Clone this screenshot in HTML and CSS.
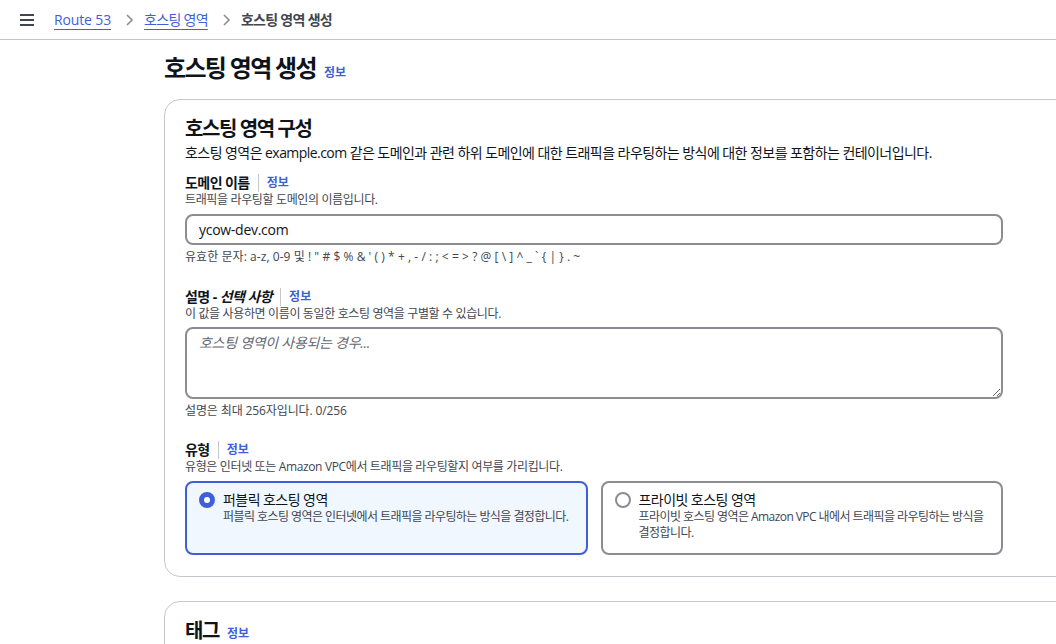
FILE: index.html
```html
<!DOCTYPE html>
<html lang="ko">
<head>
  <meta charset="UTF-8">
  <title>호스팅 영역 생성 | Route 53</title>
  <link rel="stylesheet" href="styles.css">
</head>
<body>
  <header class="topbar">
    <button class="menu-btn" aria-label="메뉴">
      <svg width="16" height="14" viewBox="0 0 16 14"><path d="M1 2h14M1 7h14M1 12h14" stroke="#424650" stroke-width="2" fill="none"/></svg>
    </button>
    <nav class="crumbs">
      <a href="#">Route 53</a>
      <svg class="chev" width="10" height="14" viewBox="0 0 10 14"><path d="M3 2l5 5-5 5" stroke="#8c8c94" stroke-width="1.6" fill="none"/></svg>
      <a href="#" class="ko">호스팅 영역</a>
      <svg class="chev" width="10" height="14" viewBox="0 0 10 14"><path d="M3 2l5 5-5 5" stroke="#8c8c94" stroke-width="1.6" fill="none"/></svg>
      <span class="current">호스팅 영역 생성</span>
    </nav>
  </header>

  <main class="page">
    <div class="page-title">
      <h1>호스팅 영역 생성</h1>
      <a class="info" href="#">정보</a>
    </div>

    <section class="card">
      <h2>호스팅 영역 구성</h2>
      <p class="card-desc">호스팅 영역은 example.com 같은 도메인과 관련 하위 도메인에 대한 트래픽을 라우팅하는 방식에 대한 정보를 포함하는 컨테이너입니다.</p>

      <div class="field">
        <div class="label-row">
          <span class="label">도메인 이름</span>
          <span class="sep"></span>
          <a class="info" href="#">정보</a>
        </div>
        <p class="hint">트래픽을 라우팅할 도메인의 이름입니다.</p>
        <input class="text-input" type="text" value="ycow-dev.com">
        <p class="hint after chars">유효한 문자: a-z, 0-9 및 ! " # $ % &amp; ' ( ) * + , - / : ; &lt; = &gt; ? @ [ \ ] ^ _ ` { | } . ~</p>
      </div>

      <div class="field">
        <div class="label-row">
          <span class="label">설명 - <i>선택 사항</i></span>
          <span class="sep"></span>
          <a class="info" href="#">정보</a>
        </div>
        <p class="hint">이 값을 사용하면 이름이 동일한 호스팅 영역을 구별할 수 있습니다.</p>
        <textarea class="text-area" placeholder="호스팅 영역이 사용되는 경우..."></textarea>
        <p class="hint after">설명은 최대 256자입니다. 0/256</p>
      </div>

      <div class="field type-field">
        <div class="label-row">
          <span class="label">유형</span>
          <span class="sep"></span>
          <a class="info" href="#">정보</a>
        </div>
        <p class="hint">유형은 인터넷 또는 Amazon VPC에서 트래픽을 라우팅할지 여부를 가리킵니다.</p>
        <div class="tiles">
          <label class="tile selected">
            <span class="radio"></span>
            <span class="tile-text">
              <span class="tile-title">퍼블릭 호스팅 영역</span>
              <span class="tile-desc">퍼블릭 호스팅 영역은 인터넷에서 트래픽을 라우팅하는 방식을 결정합니다.</span>
            </span>
          </label>
          <label class="tile">
            <span class="radio"></span>
            <span class="tile-text">
              <span class="tile-title">프라이빗 호스팅 영역</span>
              <span class="tile-desc">프라이빗 호스팅 영역은 Amazon VPC 내에서 트래픽을 라우팅하는 방식을 결정합니다.</span>
            </span>
          </label>
        </div>
      </div>
    </section>

    <section class="card">
      <div class="card-head">
        <h2>태그</h2>
        <a class="info" href="#">정보</a>
      </div>
    </section>
  </main>
</body>
</html>
```

FILE: styles.css
```css
body {
  margin: 0;
  font-family: 'Open Sans', 'Noto Sans CJK KR', sans-serif;
  color: #0f141a;
  background: #fff;
  overflow: hidden;
  letter-spacing: -0.035em;
}
a {
  color: #3f5fd9;
}
p {
  margin: 0;
}
.topbar {
  height: 40px;
  border-bottom: 1px solid #c6c6cd;
  display: flex;
  align-items: center;
  box-sizing: border-box;
}
.menu-btn {
  background: none;
  border: none;
  padding: 0;
  margin-left: 19px;
  width: 16px;
  height: 14px;
  display: flex;
}
.crumbs {
  display: flex;
  align-items: center;
  margin-left: 19px;
  font-size: 14px;
  line-height: 20px;
  letter-spacing: -0.01em;
}
.crumbs a {
  color: #3f5fd9;
  text-decoration: underline;
  text-underline-offset: 4px;
}
.crumbs .ko,
.current {
  letter-spacing: -0.05em;
}
.chev {
  margin: 0 10px 0 13px;
}
.current {
  color: #424650;
  font-weight: 700;
}
.page {
  padding-left: 164px;
  width: 960px;
}
.page-title {
  display: flex;
  align-items: baseline;
  gap: 8px;
  margin-top: 12px;
  height: 47px;
}
.page-title h1 {
  margin: 0;
  font-size: 24px;
  line-height: 32px;
  font-weight: 700;
  letter-spacing: -0.07em;
}
.info {
  font-size: 12px;
  font-weight: 700;
  text-decoration: none;
  line-height: 16px;
  letter-spacing: 0;
}
.card {
  border: 1px solid #c6c6cd;
  border-radius: 16px;
  padding: 17px 20px 21px;
  margin-bottom: 24px;
  width: 900px;
}
.card h2 {
  margin: 0;
  font-size: 20px;
  line-height: 24px;
  font-weight: 700;
  letter-spacing: -0.07em;
}
.card-head {
  display: flex;
  align-items: baseline;
  gap: 8px;
}
.card-desc {
  font-size: 14px;
  line-height: 20px;
  margin-top: 2px;
}
.field {
  width: 818px;
  margin-top: 23px;
}
.field:first-of-type {
  margin-top: 11px;
}
.type-field {
  margin-top: 22px;
}
.label-row {
  display: flex;
  align-items: center;
  height: 18px;
}
.label {
  font-size: 14px;
  font-weight: 700;
  line-height: 18px;
}
.sep {
  width: 1px;
  height: 18px;
  background: #c6c6cd;
  margin: 0 8px 0 8px;
}
.hint {
  font-size: 12px;
  line-height: 16px;
  color: #424650;
  letter-spacing: -0.03em;
}
.hint.after {
  margin-top: 4px;
  letter-spacing: -0.01em;
}
.hint.chars {
  letter-spacing: 0.005em;
}
.text-input,
.text-area {
  display: block;
  box-sizing: border-box;
  width: 818px;
  margin-top: 6px;
  border: 2px solid #8c8c94;
  border-radius: 8px;
  font-family: 'Open Sans', 'Noto Sans CJK KR', sans-serif;
  font-size: 14px;
  letter-spacing: -0.02em;
  color: #0f141a;
  padding: 4px 12px;
  outline: none;
}
.text-input {
  height: 31px;
}
.text-area {
  margin-top: 5px;
  height: 72px;
  resize: vertical;
  line-height: 20px;
}
.text-area::placeholder {
  color: #656871;
  font-style: italic;
}
.tiles {
  display: flex;
  gap: 13px;
  margin-top: 6px;
}
.tile {
  flex: 1;
  display: flex;
  gap: 8px;
  border: 2px solid #8c8c94;
  border-radius: 8px;
  padding: 8px 12px 8px 12px;
  height: 74px;
  box-sizing: border-box;
}
.tile.selected {
  border-color: #3f5fd9;
  background: #f0f7ff;
}
.radio {
  flex: none;
  width: 16px;
  height: 16px;
  box-sizing: border-box;
  border: 2px solid #8c8c94;
  border-radius: 50%;
  margin-top: 1px;
  background: #fff;
}
.selected .radio {
  border: 5px solid #3f5fd9;
}
.tile-text {
  display: flex;
  flex-direction: column;
}
.tile-title {
  font-size: 14px;
  line-height: 18px;
}
.tile-desc {
  font-size: 12px;
  line-height: 16px;
  color: #424650;
}
```
